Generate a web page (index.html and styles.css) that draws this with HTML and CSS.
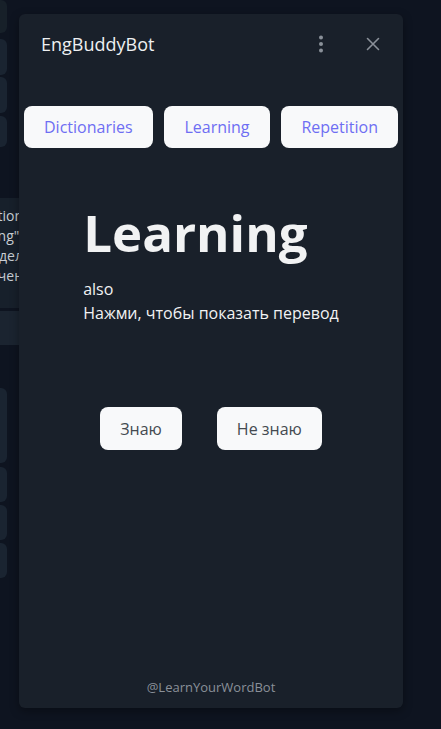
FILE: index.html
```html
<!DOCTYPE html>
<html lang="ru">
<head>
<meta charset="utf-8">
<title>EngBuddyBot</title>
<link rel="stylesheet" href="styles.css">
</head>
<body>
<div class="backdrop">
  <div class="side-card card-a"></div>
  <div class="side-card card-b"></div>
  <div class="side-card card-c"></div>
  <div class="side-card card-d"></div>
  <div class="msg">
    <div class="msg-line"><span>Press the button to start the section</span></div>
    <div class="msg-line"><span>or choose "Learning".</span></div>
    <div class="msg-line"><span>Выберите раздел</span></div>
    <div class="msg-line"><span>для продолжения обучен</span></div>
  </div>
  <div class="band"></div>
  <div class="side-card card-e"></div>
  <div class="side-card card-f"></div>
  <div class="side-card card-g"></div>
  <div class="side-card card-h"></div>
</div>

<div class="panel">
  <header class="panel-head">
    <h1 class="panel-title">EngBuddyBot</h1>
    <div class="head-actions">
      <svg class="icon kebab" width="6" height="18" viewBox="0 0 6 18"><circle cx="3" cy="2.5" r="2"/><circle cx="3" cy="9" r="2"/><circle cx="3" cy="15.5" r="2"/></svg>
      <svg class="icon close" width="14" height="14" viewBox="0 0 14 14"><path d="M1.5 1.5 L12.5 12.5 M12.5 1.5 L1.5 12.5"/></svg>
    </div>
  </header>

  <nav class="tabs">
    <button class="tab">Dictionaries</button>
    <button class="tab">Learning</button>
    <button class="tab">Repetition</button>
  </nav>

  <section class="card">
    <div class="word-block">
      <div class="word">Learning</div>
      <div class="line">also</div>
      <div class="line">Нажми, чтобы показать перевод</div>
    </div>
  </section>

  <div class="answers">
    <button class="answer">Знаю</button>
    <button class="answer">Не знаю</button>
  </div>

  <footer class="panel-foot">@LearnYourWordBot</footer>
</div>
</body>
</html>
```

FILE: styles.css
```css
* { box-sizing: border-box; }

html, body {
  margin: 0;
  padding: 0;
  height: 100%;
}

body {
  background: #0e1420;
  font-family: "Open Sans", "Noto Sans", sans-serif;
  overflow: hidden;
  position: relative;
}

/* ---------- underlying page glimpse ---------- */
.backdrop {
  display: flex;
  flex-direction: column;
  width: 60px;
}

.side-card {
  width: 7px;
  background: #1a2431;
  border-radius: 0 6px 6px 0;
}
.card-a { height: 33px; margin-top: 0; background: #172029; }
.card-b { height: 36px; margin-top: 6px; }
.card-c { height: 36px; margin-top: 2px; }
.card-d { height: 31px; margin-top: 3px; }
.card-e { height: 75px; margin-top: 43px; }
.card-f { height: 35px; margin-top: 4px; }
.card-g { height: 35px; margin-top: 3px; }
.card-h { height: 35px; margin-top: 3px; }

.msg {
  margin-top: 51px;
  height: 110px;
  width: 40px;
  background: #17202b;
  padding-top: 8px;
  display: flex;
  flex-direction: column;
}
.msg-line {
  display: flex;
  justify-content: flex-end;
  padding-right: 17px;
  height: 20px;
  font-size: 14px;
  line-height: 20px;
  color: #c9ced4;
  white-space: nowrap;
}

.band {
  margin-top: 3px;
  height: 34px;
  width: 40px;
  background: #1b2430;
}

/* ---------- panel (modal overlay) ---------- */
.panel {
  position: absolute;
  left: 19px;
  top: 14px;
  width: 384px;
  height: 694px;
  background: #19202a;
  border-radius: 6px;
  box-shadow: 0 3px 10px rgba(0, 0, 0, 0.35);
  display: flex;
  flex-direction: column;
  padding: 0 5px;
}

.panel-head {
  height: 60px;
  display: flex;
  align-items: center;
  justify-content: space-between;
  padding: 0 18px 0 17px;
}

.panel-title {
  margin: 0;
  font-size: 18px;
  font-weight: 500;
  color: #eef0f2;
  letter-spacing: 0;
}

.head-actions {
  display: flex;
  align-items: center;
  gap: 42px;
}
.icon { display: block; }
.kebab { fill: #8a9099; }
.close { stroke: #8a9099; stroke-width: 1.6; fill: none; stroke-linecap: round; }

.tabs {
  margin-top: 32px;
  display: flex;
  justify-content: space-between;
}

.tab {
  height: 42px;
  padding: 0 20px;
  border: 0;
  border-radius: 8px;
  background: #f8f9fa;
  color: #6e6ef3;
  font-family: inherit;
  font-size: 16px;
}

.card {
  margin-top: 58px;
  display: flex;
  justify-content: center;
}

.word-block {
  width: max-content;
  color: #f1f2f3;
}

.word {
  font-size: 51px;
  font-weight: 700;
  line-height: 52px;
  margin-bottom: 19px;
}

.line {
  font-size: 16px;
  line-height: 24px;
}

.answers {
  margin-top: 82px;
  display: flex;
  justify-content: center;
  gap: 35px;
}

.answer {
  height: 43px;
  padding: 0 20px;
  border: 0;
  border-radius: 8px;
  background: #f8f9fa;
  color: #444a50;
  font-family: inherit;
  font-size: 16px;
}

.panel-foot {
  margin-top: auto;
  padding-bottom: 12px;
  text-align: center;
  font-size: 13px;
  line-height: 18px;
  color: #8a9099;
}
```
